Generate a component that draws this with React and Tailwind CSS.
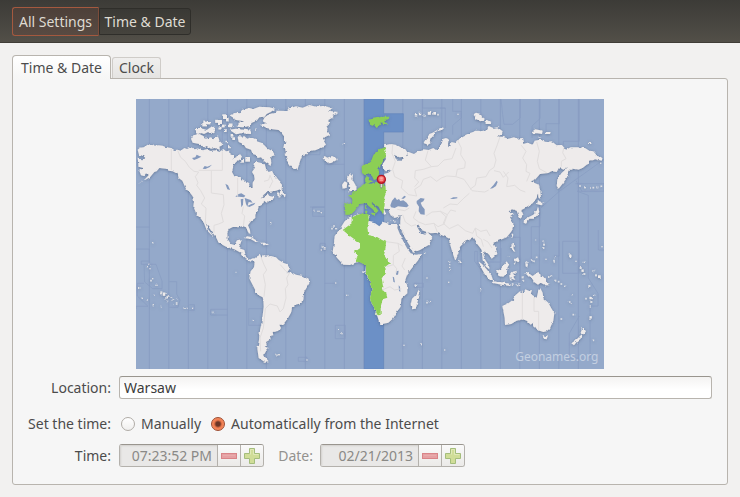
import { useState } from "react";

const zoneLines = Array.from({ length: 23 }, (_, i) => 40 + i * 58.5);

// Small islands: x, y, size
const islands = [
  [38, 498, 4], [50, 434, 4], [45, 548, 5], [60, 562, 4], [10, 570, 6], [19, 601, 4], [34, 606, 4], [52, 620, 4], [74, 626, 5], [34, 506, 4], [42, 512, 4], [50, 542, 4],
  [76, 586, 6], [84, 590, 7], [90, 586, 4], [92, 598, 7], [98, 594, 5], [106, 600, 5], [112, 606, 5], [94, 610, 5], [122, 604, 4], [122, 615, 5], [112, 617, 4], [54, 592, 4],
  [145, 630, 5], [153, 631, 4], [170, 631, 4], [230, 643, 5], [300, 523, 3], [352, 667, 4], [422, 772, 6], [428, 770, 4], [513, 786, 4], [404, 374, 4],
  [560, 446, 6], [566, 452, 6], [556, 456, 4], [534, 338, 5], [546, 340, 4], [556, 344, 4], [588, 392, 5], [594, 384, 5], [602, 392, 4], [622, 139, 4],
  [599, 555, 4], [632, 592, 4], [607, 692, 4], [618, 707, 4], [682, 522, 6], [804, 742, 4], [855, 739, 6], [926, 756, 4], [873, 540, 4], [838, 562, 5], [873, 614, 5], [880, 611, 4], [938, 553, 4], [866, 466, 4],
  [941, 492, 4], [941, 500, 4], [941, 508, 4], [941, 516, 4], [1034, 575, 4], [776, 371, 5], [764, 370, 4],
  [840, 52, 7], [852, 48, 7], [866, 53, 6], [880, 46, 9], [896, 46, 8], [906, 50, 5], [966, 49, 4], [1332, 264, 5], [1347, 268, 6], [1362, 270, 5], [1372, 269, 5], [1384, 268, 6], [1396, 265, 5], [1394, 196, 4],
  [1199, 426, 3], [1222, 430, 5], [1224, 440, 6], [1222, 450, 6], [1202, 478, 5], [1194, 490, 5], [1230, 484, 4], [1254, 488, 5], [1258, 480, 4], [1172, 500, 7], [1170, 494, 5], [1172, 506, 5],
  [1188, 488, 5], [1255, 492, 4], [1303, 474, 7], [1300, 468, 4], [1320, 490, 4], [1345, 493, 4], [1334, 510, 6], [1340, 518, 7], [1345, 528, 6], [1372, 520, 5], [1380, 532, 6], [1390, 536, 8], [1398, 446, 4],
  [1360, 564, 6], [1350, 602, 5], [1364, 600, 7], [1366, 612, 6], [1363, 624, 4], [1376, 592, 4], [1364, 658, 7], [1362, 664, 4], [1301, 612, 5], [1306, 618, 4], [1276, 663, 5], [1312, 650, 5], [1372, 727, 5],
  [1237, 537, 6], [1246, 534, 5], [1258, 548, 6], [1268, 551, 5], [1276, 558, 5], [1286, 565, 4], [1308, 590, 4],
  [1130, 558, 5], [1142, 562, 6], [1150, 559, 5], [1160, 538, 6], [1162, 548, 5], [1136, 494, 5], [1120, 478, 4], [1160, 550, 4],
  [206, 78, 14], [218, 74, 10], [242, 70, 9], [252, 72, 12], [266, 56, 14], [274, 66, 8], [284, 82, 11], [234, 90, 7], [288, 112, 8], [293, 122, 8], [272, 132, 7], [335, 184, 14],
  [290, 175, 8], [310, 116, 8], [360, 94, 5], [398, 188, 12], [360, 160, 14], [430, 296, 5], [350, 416, 4], [340, 404, 4],
  [188, 98, 16], [252, 90, 9], [262, 84, 8], [268, 98, 8], [330, 128, 10], [280, 146, 9], [320, 190, 8],
];

const land = [
  // North and Central America
  "M5 155L12 149 23 148 35 140 50 138 56 143 68 142 80 143 88 147 105 150 115 156 125 155 134 158 145 150 153 153 165 148 176 154 188 151 200 157 215 153 222 159 238 157 250 162 262 153 270 160 282 158 284 170 294 172 290 182 304 176 312 168 318 176 310 186 300 192 292 205 288 222 295 235 312 239 328 250 338 254 342 270 350 270 350 254 356 244 354 232 348 222 358 208 352 198 362 192 376 195 386 198 390 212 398 222 408 218 414 230 425 245 438 260 437 272 420 278 404 281 392 283 383 290 374 302 386 295 396 289 400 294 418 298 404 306 392 314 384 308 382 318 368 326 364 340 358 350 358 360 345 370 336 382 342 396 343 408 336 402 330 388 320 384 308 388 295 385 280 392 274 402 275 424 285 438 295 441 303 427 318 424 312 441 308 450 325 456 330 476 340 486 352 480 356 488 345 491 330 484 322 476 314 464 295 454 270 446 248 434 240 418 228 402 216 384 209 376 216 394 232 414 226 410 212 396 204 376 195 362 184 352 180 345 172 325 174 308 170 295 162 284 150 272 145 262 139 248 128 240 125 228 110 220 98 218 90 212 70 210 62 220 55 222 42 238 20 250 3 260 25 245 38 232 30 226 24 234 15 232 10 218 22 210 8 206 5 182 20 184 28 178 20 172 10 174Z",
  // Canadian archipelago
  "M285 52L300 44 312 46 318 36 340 30 352 33 370 26 400 28 418 32 404 42 392 48 386 56 370 58 362 68 346 75 344 84 320 88 300 86 308 76 325 70 300 66 288 60Z",
  "M280 95L300 92 345 98 342 108 318 106 300 109Z",
  "M305 118L325 115 334 122 345 118 356 122 362 130 376 134 385 142 395 152 410 160 417 172 402 176 406 190 404 204 385 190 375 178 365 180 358 170 350 168 345 155 330 150 322 138 308 132Z",
  "M172 112L190 108 202 114 210 122 225 118 232 124 246 112 250 128 262 140 250 146 252 155 236 150 225 152 212 144 205 148 190 138 170 134 165 122Z",
  "M178 98L200 92 212 96 224 88 240 96 234 106 216 102 204 108Z",
  "M425 280L430 288 438 270 441 284 449 288 447 298 438 292 424 293Z",
  // Greenland
  "M375 80L390 76 380 70 386 58 400 48 415 46 424 38 450 39 458 32 480 25 500 29 520 21 540 26 560 24 590 30 576 38 607 42 590 50 592 58 577 66 580 78 570 88 574 98 582 110 566 118 562 126 570 140 560 146 542 155 520 160 508 172 497 175 492 190 484 217 472 212 464 204 458 195 450 184 454 176 446 168 450 160 442 150 444 140 452 132 444 126 444 115 436 104 428 96 410 94 392 90Z",
  // Caribbean
  "M323 420L334 415 345 417 358 425 370 430 358 431 344 423Z",
  "M372 434L386 434 396 440 382 442Z",
  // South America
  "M352 484L365 474 373 470 376 480 380 470 388 476 405 474 420 478 428 486 438 492 455 498 462 511 452 526 466 523 480 530 500 534 518 545 520 556 510 572 504 583 502 606 490 617 478 620 468 628 465 644 456 660 450 671 443 680 430 680 435 690 430 698 410 702 412 712 402 714 404 724 390 732 393 742 386 746 398 750 390 760 384 770 388 778 398 790 385 791 368 780 364 752 369 726 372 696 378 668 383 626 382 606 380 598 366 591 355 571 345 551 340 541 344 520 354 508 356 494Z",
  // Africa
  "M626 370L640 358 670 348 694 348 700 356 697 371 717 376 730 385 742 372 760 378 785 378 784 390 794 414 804 434 814 452 824 466 838 470 855 468 847 486 830 508 814 528 808 546 814 568 814 586 796 602 794 626 784 640 772 661 757 674 736 679 730 676 722 651 714 631 702 601 707 576 700 546 688 521 690 501 672 491 658 494 642 501 622 500 604 481 590 461 594 436 596 414 612 392Z",
  "M849 574L852 586 844 614 838 632 828 634 824 620 828 602 840 590Z",
  // British Isles and Iceland
  "M634 234L642 228 648 234 646 244 652 250 658 260 662 270 658 278 636 280 644 270 636 264 642 258 634 248Z",
  "M618 260L626 250 634 254 632 268 620 272Z",
  "M560 180L566 174 574 179 588 174 600 180 602 186 590 193 578 196 568 190Z",
  // Western Russia and Eastern Europe
  "M744 142L764 138 782 141 794 148 808 154 816 166 808 176 790 178 774 170 782 188 796 188 804 176 812 174 818 162 834 168 846 160 856 162 862 154 878 156 892 150 900 156 918 146 940 144 960 146 960 430 890 400 820 350 764 346 758 333 744 332 750 348 744 350 740 336 744 300 748 262 748 242 744 228 757 224 768 216 750 220 741 212 740 198 750 184 746 162Z",
  "M918 146L914 140 918 124 930 120 938 124 936 138 940 160 920 160Z",
  "M862 135L868 126 874 120 880 108 890 104 900 98 916 88 924 90 918 96 902 100 888 114 882 124 886 134 876 140Z",
  // Middle East and India
  "M764 332L1032 306 1032 424 1022 420 1008 410 1004 424 987 431 972 446 966 470 958 488 950 466 942 438 938 420 922 411 907 404 884 406 866 400 856 396 846 382 842 384 850 398 858 409 868 410 874 402 890 418 878 441 852 456 831 464 822 444 812 428 802 410 792 388 794 354 776 360 764 352 758 340Z",
  // Siberia, China and the far east
  "M912 140L918 128 934 122 934 140 942 152 946 132 960 135 972 120 990 110 1000 106 1022 98 1036 100 1052 95 1058 84 1072 90 1084 88 1100 100 1096 110 1082 116 1100 116 1117 122 1134 118 1144 122 1158 120 1162 138 1174 134 1190 140 1196 128 1212 125 1230 132 1247 130 1262 142 1277 140 1290 155 1304 148 1322 148 1347 150 1360 158 1372 160 1384 174 1397 178 1394 188 1378 184 1362 188 1362 196 1352 200 1340 210 1327 215 1310 212 1297 218 1292 240 1282 254 1268 272 1262 264 1264 244 1276 226 1297 206 1282 215 1270 208 1262 222 1246 220 1237 225 1212 228 1197 245 1184 250 1208 260 1210 275 1202 300 1190 316 1172 326 1164 332 1156 336 1162 350 1154 362 1147 352 1142 338 1128 334 1118 340 1124 346 1134 348 1122 358 1132 376 1130 394 1125 402 1112 418 1087 428 1072 434 1080 451 1084 468 1067 482 1060 471 1047 458 1042 470 1048 486 1060 504 1060 514 1050 506 1040 486 1037 456 1030 446 1018 431 1010 418 1000 424 912 400Z",
  "M966 482L974 486 974 494 968 494Z",
  "M1208 256L1213 276 1215 300 1207 302 1206 284Z",
  "M1202 318L1206 306 1216 314 1225 314 1216 322Z",
  "M1206 326L1210 342 1204 352 1192 362 1180 362 1170 377 1163 374 1164 365 1180 356 1192 350 1202 338Z",
  "M1128 406L1132 410 1129 420 1126 414Z",
  "M1010 50L1020 44 1034 48 1038 56 1046 62 1042 72 1030 68 1018 62 1020 54Z",
  "M1046 72L1056 66 1066 72 1062 78 1050 78Z",
  "M1190 100L1198 94 1220 98 1218 108 1204 106 1192 106Z",
  "M1228 102L1244 102 1242 108 1230 108Z",
  "M1206 118L1212 114 1216 120Z",
  "M1354 138L1360 133 1368 138Z",
  // Indonesia and New Guinea
  "M1027 490L1038 498 1052 514 1066 532 1071 546 1062 546 1048 532 1038 514Z",
  "M1070 548L1084 552 1096 552 1124 559 1122 564 1096 560 1072 555Z",
  "M1080 520L1094 514 1104 500 1112 490 1120 502 1114 512 1112 526 1102 536 1088 534Z",
  "M1122 546L1120 532 1126 522 1144 518 1138 524 1128 528 1140 530 1132 536 1138 546 1130 544 1127 536 1126 548Z",
  "M1168 526L1178 522 1184 530 1190 534 1198 528 1208 526 1222 536 1230 546 1240 562 1228 562 1214 554 1206 560 1194 552 1190 544 1180 538Z",
  "M1128 436L1134 438 1132 450 1138 462 1130 458 1126 446Z",
  "M1136 484L1146 478 1150 488 1146 496 1138 490Z",
  // Australia and New Zealand
  "M1099 624L1117 616 1130 606 1138 592 1152 580 1162 586 1168 574 1178 578 1188 576 1184 588 1202 599 1208 574 1213 571 1220 584 1222 601 1237 614 1246 631 1255 646 1252 668 1242 691 1232 700 1222 702 1204 696 1196 684 1192 674 1184 680 1172 668 1160 664 1142 668 1126 678 1107 681 1106 660Z",
  "M1220 711L1228 714 1236 712 1232 724 1224 722Z",
  "M1332 681L1338 690 1344 696 1352 696 1346 706 1338 712 1334 704 1338 694Z",
  "M1336 710L1334 722 1324 730 1314 742 1306 736 1320 726Z",
];

const activeZone = [
  "M677 205L690 198 698 194 707 185 712 172 720 162 732 152 747 148 750 165 747 180 740 184 737 196 727 212 729 226 724 242 714 246 708 234 698 226 687 232 678 224Z",
  "M687 242L694 232 700 236 698 246 708 250 696 257 688 252Z",
  "M668 270L682 262 690 254 704 258 720 252 732 256 748 262 750 285 745 298 746 320 742 346 734 338 728 326 714 318 706 310 704 316 718 326 727 338 720 346 710 334 698 324 690 315 672 318 664 328 652 342 640 350 628 350 628 320 622 316 648 318 650 302 636 292 650 290 656 282Z",
  "M688 320L693 324 692 334 688 332Z",
  "M688 338L694 338 693 347 688 346Z",
  "M706 344L720 345 716 354Z",
  "M697 65L712 62 724 60 736 56 760 56 758 64 744 66 756 80 742 80 738 72 728 84 722 90 714 80 708 84 702 74Z",
  "M647 358L672 348 697 348 699 368 694 386 697 411 722 416 738 426 750 431 748 456 744 471 752 484 762 496 748 506 750 526 737 541 742 566 740 576 750 586 754 599 740 604 734 626 734 651 725 652 714 631 702 601 707 576 700 546 690 521 690 502 672 493 660 491 664 476 657 461 672 451 672 436 642 414 620 396 647 376Z",
];

const inlandWater = [
  "M298 296L306 289 316 286 328 293 324 298 310 296Z",
  "M314 304L322 302 321 320 316 328Z",
  "M326 300L344 306 350 314 338 312 334 326 330 318Z",
  "M334 324L346 318 358 314 354 320 340 327Z",
  "M168 180L178 178 182 170 190 174 196 176 184 182 174 186Z",
  "M200 212L206 204 214 206 228 200 220 208 208 213Z",
  "M268 257L276 262 282 276 274 274Z",
  // Black Sea, Azov and Caspian
  "M763 322L768 308 777 298 783 306 789 303 793 309 802 307 812 314 818 323 812 328 798 326 786 325 776 330 765 328Z",
  "M796 302L805 293 810 296 803 302Z",
  "M842 309L854 300 866 302 862 310 854 314 858 324 866 334 866 350 854 349 848 340 849 326 842 316Z",
  "M1062 272L1072 262 1082 248 1085 252 1080 264 1070 271Z",
  "M942 302L952 298 964 298 964 301 952 303Z",
  "M780 520L788 518 786 530 780 530Z",
  "M770 536L774 538 777 554 772 550Z",
  "M788 562L792 566 793 582 789 578Z",
];

const borders = [
  "M106 151L106 216M125 158L134 178 148 190 160 208 174 220 188 222M188 222L178 236 186 254 182 262 194 278 206 300 196 318 210 330 208 376M226 217L226 285 262 290 264 320 256 346 262 372 248 378 234 382 234 404M188 217L259 217 259 160M305 240L305 296M322 326L318 346 326 354 322 384M384 250L398 246 402 232 410 250 400 270",
  "M376 480L384 500 392 516 382 530 388 560 384 596M433 500L450 520 460 526 452 540 456 560 448 572 450 600 442 632 432 642 424 624 402 618 388 632 382 690 372 720 374 760",
  "M770 140L768 166 778 190 770 214 776 236 800 248 796 270 818 290 842 294M876 158L868 186 886 206 862 214 838 218 836 240 848 252 836 266M886 206L906 204 924 186 948 182 960 150",
  "M842 294L836 274 854 262 862 244 884 236 902 250 916 240 932 234 960 236 984 244 1008 278 1024 280 1046 282 1058 276",
  "M964 126L976 150 974 170 988 192 986 210 964 214 960 234M1092 116L1084 140 1074 166 1080 186 1074 208 1060 218 1050 236 1022 240 1018 262 1002 274M1102 220L1116 240 1112 266 1136 262 1152 276 1168 282M1156 142L1170 160 1160 180 1172 200 1170 220 1182 226 1172 250M1202 132L1210 160 1204 190 1210 212 1232 224M1284 148L1280 164 1290 182 1276 190 1276 206",
  "M922 330L942 318 964 320 984 300 1000 286M912 340L930 356 922 376 940 392 966 380 988 398 1010 406 1018 390 1034 400 1052 396 1062 414M1074 218L1092 222 1102 238 1118 222",
  "M784 334L806 338 820 330M800 350L808 372 826 384 840 380M840 340L832 360 848 372 868 380 894 376 906 386 924 378 934 350 914 340 888 342 870 354M894 376L904 402M934 350L944 336 960 340",
  "M796 392L806 410M750 431L786 436 800 444M786 436L790 460 772 472 772 500 782 512 780 526M772 500L752 506M808 480L798 504 806 516M738 576L762 566 776 576 796 572",
  "M1159 578L1159 666M1194 598L1194 640 1208 640 1208 698M1018 390L1022 414 1036 424 1042 446M1042 424L1056 432 1068 450",
];

const zoneShapes = [
  "M0 387H40M0 453H40V489H16V499H60L78 549V572H50L26 552 24 499M0 633V625H36L4 594V556H24M100 551H122V588L132 606 126 628H100M160 620H175V637H160M275 634H224V651H275M380 632H338V682H374M487 778H513V790H487Z",
  "M275 48V62H259V153M566 55H552V170H508M566 199H625M566 327H530V355H566M522 327H566M552 436H568V457H552ZM566 556H600M600 682H628V722H598V682Z",
  "M860 3V30H928V90M912 30H928M950 3V40H976V60L950 82V110M1095 3L1100 50 1104 79H1130L1153 60V3M1212 3V62L1188 84V120M1270 3V77H1230V108M1330 3V130H1282V140M1404 184L1270 280 1214 330M1318 257H1404V280H1324L1357 292V390M1320 248L1338 280",
  "M834 556V568H862V556ZM1016 460H1024V496H1042M1016 460V490L1042 524M1212 330V386H1186V496M1280 430H1330V526H1280V430M1387 396V456H1404M1357 390V540L1386 586V624H1362V780M1270 430V474H1254M1330 654L1300 706V784M1330 780H1300M1095 450V492H1050M1129 386V418H1153V550H1129",
];

function WorldMap() {
  return (
    <div className="relative w-[468px] max-w-full">
      <svg viewBox="0 3 1404 810" className="block h-auto w-full" role="img" aria-label="World map of time zones">
        <defs>
          <filter id="coast" x="-2%" y="-2%" width="104%" height="104%">
            <feTurbulence type="fractalNoise" baseFrequency="0.09" numOctaves="2" seed="4" result="noise" />
            <feDisplacementMap in="SourceGraphic" in2="noise" scale="9" xChannelSelector="R" yChannelSelector="G" result="rough" />
            <feDropShadow in="rough" dx="0" dy="2" stdDeviation="4" floodColor="#4d6180" floodOpacity="0.7" />
          </filter>
          <radialGradient id="pin" cx="50%" cy="40%" r="60%">
            <stop offset="0" stopColor="#ffa8a2" />
            <stop offset="0.55" stopColor="#f06060" />
            <stop offset="1" stopColor="#d81c28" />
          </radialGradient>
        </defs>
        <rect y="3" width="1404" height="810" fill="#94a9ca" />
        <g fill="none" stroke="#889dc2" strokeWidth="3">
          {zoneLines.map((x) => (
            <path key={x} d={`M${x} 3V813`} />
          ))}
        </g>
        <g fill="none" stroke="#879cc1" strokeWidth="2">
          {zoneShapes.map((d) => (
            <path key={d} d={d} />
          ))}
        </g>
        <path d="M685 3H743V47H802V102H743V813H685Z" fill="#6c90c6" stroke="#6485bb" strokeWidth="2" />
        <g filter="url(#coast)">
          <g fill="#eeebeb">
            {land.map((d) => (
              <path key={d} d={d} />
            ))}
            {islands.map(([x, y, s], i) => (
              <rect key={i} x={x - s / 2} y={y - s / 2} width={s} height={s} opacity={s < 7 ? 0.8 : 1} />
            ))}
          </g>
          <g fill="#8ccf55">
            {activeZone.map((d) => (
              <path key={d} d={d} />
            ))}
          </g>
        </g>
        <g fill="#8499bd">
          {inlandWater.map((d) => (
            <path key={d} d={d} />
          ))}
        </g>
        <g fill="none" stroke="#e0dddd" strokeWidth="3" strokeLinejoin="round">
          {borders.map((d) => (
            <path key={d} d={d} />
          ))}
        </g>
        <path d="M733 252h6v14l-3 5-3-5z" fill="#e8e8e8" stroke="#777" strokeWidth="2" />
        <circle cx="736" cy="244" r="12" fill="url(#pin)" stroke="#b81822" strokeWidth="4" />
        <path d="M731 240h10M731 247h10" stroke="#ffb8b2" strokeWidth="2" />
      </svg>
      <span className="absolute right-[5px] bottom-1 text-[12px] leading-4 text-[#c3cfe1]">Geonames.org</span>
    </div>
  );
}

function SpinField({ id, value }) {
  const button =
    "flex w-[23px] items-center justify-center border-l border-[#b4b1ac] bg-linear-to-b from-[#fafafa] to-[#ebeae8]";
  return (
    <div className="flex h-[23px] w-[145px] overflow-hidden rounded-[3px] border border-[#b4b1ac] border-t-[#99958e]">
      <input
        id={id}
        value={value}
        readOnly
        disabled
        className="min-w-0 flex-1 bg-[#e9e8e7] pr-[5px] text-right text-[#8a8986] shadow-[inset_1px_1px_2px_#d2d0cd]"
      />
      <button type="button" disabled aria-label="Decrease" className={button}>
        <svg viewBox="0 0 16 16" className="size-4">
          <rect x="0.5" y="5.5" width="15" height="5" fill="#e5a0a3" stroke="#d98488" />
          <path d="M2 7.5H14" stroke="#e9abab" />
        </svg>
      </button>
      <button type="button" disabled aria-label="Increase" className={button}>
        <svg viewBox="0 0 16 16" className="size-4">
          <path d="M5.5 .5h5v5h5v5h-5v5h-5v-5h-5v-5h5z" fill="#d0dd98" stroke="#a4bd7c" />
          <path d="M6.5 6.500V1.500h3v5h5" fill="none" stroke="#e1e9b8" />
        </svg>
      </button>
    </div>
  );
}

function Radio({ id, checked, onChange, children }) {
  return (
    <div className="flex items-center gap-[6px]">
      <input
        id={id}
        type="radio"
        name="mode"
        checked={checked}
        onChange={onChange}
        className="size-[14px] appearance-none rounded-full border border-[#b0aca6] bg-linear-to-b from-white to-[#f0efee] checked:border-[#9e4c30] checked:bg-[radial-gradient(circle,#6b3526_0_2px,#f07b4e_4px,#f38c62_6px)]"
      />
      <label htmlFor={id}>{children}</label>
    </div>
  );
}

export default function App() {
  const [mode, setMode] = useState("auto");
  const [location, setLocation] = useState("Warsaw");
  const rowLabel = "text-right whitespace-nowrap";
  return (
    <div className="flex min-h-screen flex-col bg-[#f2f1f0] font-['Noto_Sans',sans-serif] text-[14px] leading-5 text-[#4c4c4c]">
      <header className="flex h-[43px] border-b border-[#403d37] bg-linear-to-b from-[#3c3b37] to-[#524f48] px-3 pt-[7px] text-[#dfdbd2]">
        <button
          type="button"
          className="h-[29px] w-[87px] rounded-l-[3px] border border-[#a4593f] border-r-[#7b4c3a] bg-linear-to-b from-[#4d4039] to-[#584a42] whitespace-nowrap"
        >
          All Settings
        </button>
        <button
          type="button"
          className="mt-px h-[27px] w-[92px] rounded-r-[3px] border border-[#2f2e2a] bg-linear-to-b from-[#3a3935] to-[#45433d] whitespace-nowrap"
        >
          Time &amp; Date
        </button>
      </header>

      <main className="flex flex-1 flex-col p-3">
        <div role="tablist" className="flex items-end gap-px">
          <button
            type="button"
            role="tab"
            aria-selected="true"
            className="relative z-10 -mb-px h-6 w-[99px] rounded-t-[4px] border border-b-0 border-[#b8b4ae] bg-linear-to-b from-white to-[#f6f6f5] whitespace-nowrap"
          >
            Time &amp; Date
          </button>
          <button
            type="button"
            role="tab"
            aria-selected="false"
            className="h-[21px] w-[49px] rounded-t-[3px] border border-b-0 border-[#cfccc8] bg-linear-to-b from-[#f0efee] to-[#e5e4e2]"
          >
            Clock
          </button>
        </div>

        <section className="flex-1 rounded-[3px] rounded-tl-none border border-[#b8b4ae] bg-[#f6f6f6] pt-5 pr-[15px] pl-[14px]">
          <div className="flex justify-center">
            <WorldMap />
          </div>
          <div className="mt-[7px] grid grid-cols-[84px_1fr] items-center gap-x-2">
            <label htmlFor="location" className={rowLabel}>
              Location:
            </label>
            <input
              id="location"
              value={location}
              onChange={(e) => setLocation(e.target.value)}
              className="h-[23px] w-full rounded-[3px] border border-[#b8b4ae] border-t-[#99958e] bg-linear-to-b from-[#f4f3f2] to-white to-60% px-1 text-[#3c3c3c]"
            />
            <span className={`${rowLabel} mt-[15px]`}>Set the time:</span>
            <div className="mt-[15px] flex gap-[10px] pl-[2px]">
              <Radio id="manual" checked={mode === "manual"} onChange={() => setMode("manual")}>
                Manually
              </Radio>
              <Radio id="auto" checked={mode === "auto"} onChange={() => setMode("auto")}>
                Automatically from the Internet
              </Radio>
            </div>
            <label htmlFor="time" className={`${rowLabel} mt-[10px]`}>
              Time:
            </label>
            <div className="mt-[10px] flex items-center">
              <SpinField id="time" value="07:23:52 PM" />
              <label htmlFor="date" className="w-[49px] text-right text-[#94928f]">
                Date:
              </label>
              <div className="ml-[7px]">
                <SpinField id="date" value="02/21/2013" />
              </div>
            </div>
          </div>
        </section>
      </main>
    </div>
  );
}
